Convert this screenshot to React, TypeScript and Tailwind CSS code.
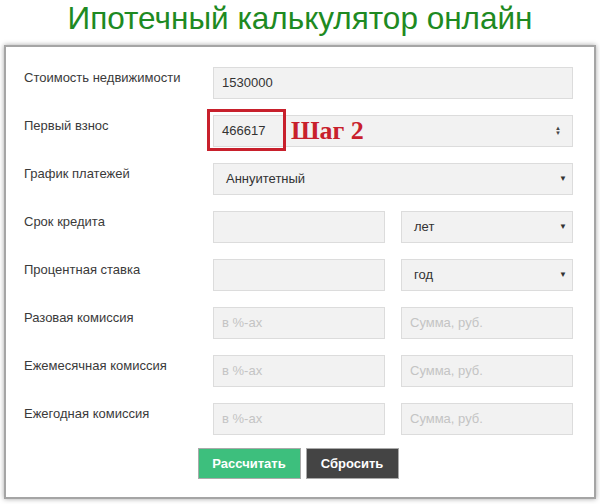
import React from 'react'

const font = { fontFamily: '"Liberation Sans", Arial, sans-serif' }

function Field({ value, placeholder, className = '' }: { value?: string; placeholder?: string; className?: string }) {
  return (
    <div className={`h-[32px] flex items-center px-2 bg-[#f2f2f2] border border-[#dcdcdc] text-[13px] ${className}`}>
      {value ? <span className="text-[#333]">{value}</span> : <span className="text-[#c4c4c4]">{placeholder}</span>}
    </div>
  )
}

function Select({ value, className = '' }: { value: string; className?: string }) {
  return (
    <div className={`h-[32px] flex items-center justify-between pl-3 pr-[5px] bg-[#f2f2f2] border border-[#dcdcdc] text-[13px] text-[#333] ${className}`}>
      <span>{value}</span>
      <span className="text-[8px] text-[#333]">▼</span>
    </div>
  )
}

function Row({ label, children }: { label: string; children: React.ReactNode }) {
  return (
    <div className="flex items-start h-[32px]">
      <div className="w-[189px] pt-[1px] text-[13px] leading-[20px] text-[#3a3a3a]">{label}</div>
      <div className="flex-1 flex gap-4">{children}</div>
    </div>
  )
}

export default function App() {
  return (
    <div className="w-[600px] h-[504px] bg-white overflow-hidden" style={font}>
      {/* Title */}
      <h1 className="h-[45px] text-center text-[31.5px] leading-[34px] pt-[1px] text-[#1e8a22]">Ипотечный калькулятор онлайн</h1>

      {/* Card */}
      <div className="mx-[4px] h-[454px] border-2 border-[#a5a5a5] shadow-[0_0_5px_rgba(0,0,0,0.35)] bg-white pl-[18px] pr-[21px] pt-[20px]">
        <div className="flex flex-col gap-4">
          <Row label="Стоимость недвижимости">
            <Field value="1530000" className="flex-1" />
          </Row>
          <Row label="Первый взнос">
            <div className="relative flex-1">
              <div className="h-[32px] flex items-center justify-between px-2 bg-[#f2f2f2] border border-[#dcdcdc] text-[13px] text-[#333]">
                <span>466617</span>
                <span className="flex flex-col items-center text-[6px] leading-[5px] text-[#444] pr-[3px]">
                  <span>▲</span>
                  <span>▼</span>
                </span>
              </div>
              <div className="absolute left-[-6px] top-[-6px] w-[79px] h-[42px] border-[3px] border-[#c8202c]" />
              <span
                className="absolute left-[78px] top-[2px] text-[26px] leading-[28px] font-bold text-[#c8202c]"
                style={{ fontFamily: '"Liberation Serif", "Times New Roman", serif' }}
              >
                Шаг 2
              </span>
            </div>
          </Row>
          <Row label="График платежей">
            <Select value="Аннуитетный" className="flex-1" />
          </Row>
          <Row label="Срок кредита">
            <Field className="w-[172px]" />
            <Select value="лет" className="flex-1" />
          </Row>
          <Row label="Процентная ставка">
            <Field className="w-[172px]" />
            <Select value="год" className="flex-1" />
          </Row>
          <Row label="Разовая комиссия">
            <Field placeholder="в %-ах" className="w-[172px]" />
            <Field placeholder="Сумма, руб." className="flex-1" />
          </Row>
          <Row label="Ежемесячная комиссия">
            <Field placeholder="в %-ах" className="w-[172px]" />
            <Field placeholder="Сумма, руб." className="flex-1" />
          </Row>
          <Row label="Ежегодная комиссия">
            <Field placeholder="в %-ах" className="w-[172px]" />
            <Field placeholder="Сумма, руб." className="flex-1" />
          </Row>
        </div>

        {/* Buttons */}
        <div className="flex justify-center gap-[5px] mt-[13px] pr-[1px]">
          <button className="w-[103px] h-[31px] bg-[#3dbf7d] border border-[#aaa] text-white text-[13px] font-bold">Рассчитать</button>
          <button className="w-[93px] h-[31px] bg-[#444] border border-[#aaa] text-white text-[13px] font-bold">Сбросить</button>
        </div>
      </div>
    </div>
  )
}
